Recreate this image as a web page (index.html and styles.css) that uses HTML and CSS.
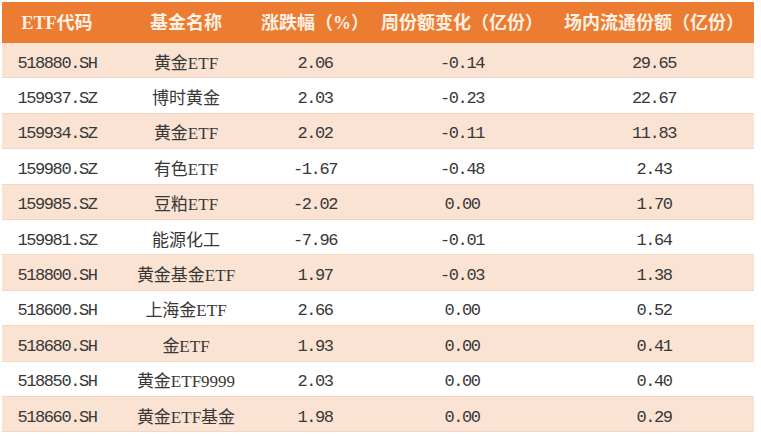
FILE: index.html
```html
<!DOCTYPE html>
<html lang="zh-CN">
<head>
<meta charset="utf-8">
<title>ETF</title>
<link rel="stylesheet" href="styles.css">
</head>
<body>
<div class="wrap">
<table class="etf">
  <colgroup>
    <col class="c1"><col class="c2"><col class="c3"><col class="c4"><col class="c5">
  </colgroup>
  <thead>
    <tr><th>ETF代码</th><th>基金名称</th><th>涨跌幅（%）</th><th>周份额变化（亿份）</th><th>场内流通份额（亿份）</th></tr>
  </thead>
  <tbody>
    <tr><td class="num">518880.SH</td><td class="name">黄金ETF</td><td class="num">2.06</td><td class="num">-0.14</td><td class="num">29.65</td></tr>
    <tr><td class="num">159937.SZ</td><td class="name">博时黄金</td><td class="num">2.03</td><td class="num">-0.23</td><td class="num">22.67</td></tr>
    <tr><td class="num">159934.SZ</td><td class="name">黄金ETF</td><td class="num">2.02</td><td class="num">-0.11</td><td class="num">11.83</td></tr>
    <tr><td class="num">159980.SZ</td><td class="name">有色ETF</td><td class="num">-1.67</td><td class="num">-0.48</td><td class="num">2.43</td></tr>
    <tr><td class="num">159985.SZ</td><td class="name">豆粕ETF</td><td class="num">-2.02</td><td class="num">0.00</td><td class="num">1.70</td></tr>
    <tr><td class="num">159981.SZ</td><td class="name">能源化工</td><td class="num">-7.96</td><td class="num">-0.01</td><td class="num">1.64</td></tr>
    <tr><td class="num">518800.SH</td><td class="name">黄金基金ETF</td><td class="num">1.97</td><td class="num">-0.03</td><td class="num">1.38</td></tr>
    <tr><td class="num">518600.SH</td><td class="name">上海金ETF</td><td class="num">2.66</td><td class="num">0.00</td><td class="num">0.52</td></tr>
    <tr><td class="num">518680.SH</td><td class="name">金ETF</td><td class="num">1.93</td><td class="num">0.00</td><td class="num">0.41</td></tr>
    <tr><td class="num">518850.SH</td><td class="name">黄金ETF9999</td><td class="num">2.03</td><td class="num">0.00</td><td class="num">0.40</td></tr>
    <tr><td class="num">518660.SH</td><td class="name">黄金ETF基金</td><td class="num">1.98</td><td class="num">0.00</td><td class="num">0.29</td></tr>
  </tbody>
</table>
</div>
</body>
</html>
```

FILE: styles.css
```css
html, body {
  margin: 0;
  padding: 0;
  background: #ffffff;
}

.wrap {
  padding: 2px 0 0 2px;
}

.etf {
  width: 752px;
  table-layout: fixed;
  border-collapse: separate;
  border-spacing: 0;
  color: #383838;
}

.c1 { width: 110px; }
.c2 { width: 148px; }
.c3 { width: 110px; }
.c4 { width: 184px; }
.c5 { width: 200px; }

.etf th {
  background: #ec7c31;
  color: #fdf0e4;
  font-family: "Liberation Serif", "Noto Sans CJK SC", serif;
  font-weight: bold;
  font-size: 18px;
  line-height: 20px;
  height: 41px;
  padding: 0;
  text-align: center;
  white-space: nowrap;
}

.etf td {
  height: 35.4px;
  padding: 7px 0 0 0;
  line-height: 20px;
  text-align: center;
  vertical-align: middle;
  border-bottom: 1px solid #f5d6c2;
  white-space: nowrap;
  box-sizing: border-box;
}

.etf tbody tr:nth-child(odd) td {
  background: #fbe3d4;
}

.num {
  font-family: "Liberation Mono", monospace;
  font-size: 17px;
  letter-spacing: -1.4px;
}

.name {
  font-family: "Liberation Serif", "Noto Sans CJK SC", serif;
  font-size: 17px;
}
```
